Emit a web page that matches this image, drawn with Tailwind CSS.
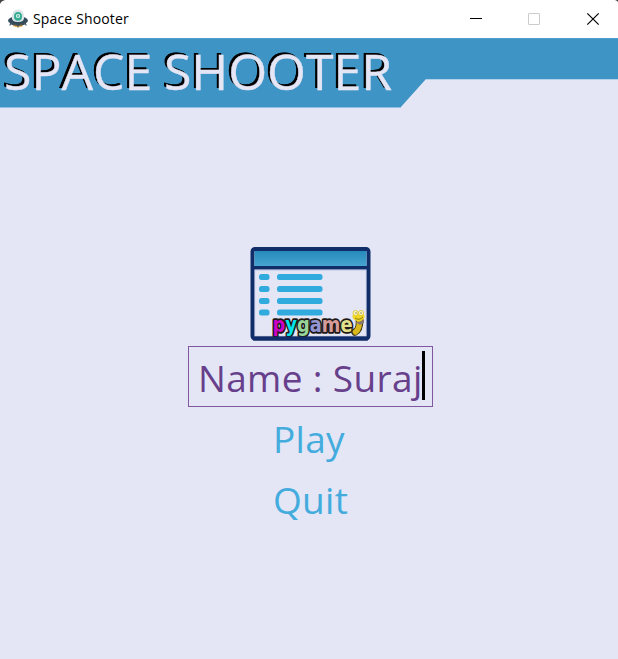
<!DOCTYPE html>
<html lang="en">
<head>
<meta charset="utf-8">
<title>Space Shooter</title>
<script src="https://cdn.jsdelivr.net/npm/@tailwindcss/browser@4"></script>
</head>
<body class="bg-[#e4e6f6]">
<div class="flex h-[659px] w-[618px] flex-col overflow-hidden bg-[#e4e6f6] font-['Open_Sans','Noto_Sans',sans-serif]">
  <header class="relative flex h-[38px] shrink-0 items-center bg-white pl-[8px]">
    <svg class="absolute top-0 left-0 h-1 w-full" viewBox="0 0 618 4"><path d="M0 0H5Q1 1 0 4ZM615 0H618V2Q617 .5 615 0Z" fill="#444"/></svg>
    <svg class="size-5 shrink-0" viewBox="0 0 20 20">
      <path d="M4 13.5H16L14.5 17.3Q10 19.4 5.5 17.3Z" fill="#e8ab48"/>
      <path d="M3 14L1.7 16.5M17 14L18.3 16.5M10 16V18.5" stroke="#526778" stroke-width="1.2"/>
      <ellipse cx="10" cy="11.5" rx="10" ry="4.4" fill="#344b5c"/>
      <path d="M3.8 8.5Q4 .8 10 .6Q16 .8 16.2 8.5Q16 13 10 13Q4 13 3.8 8.5Z" fill="#dce5e7"/>
      <path d="M6 7.5Q6 3 10 3T14 7.5Q14 11.8 10 11.8T6 7.5Z" fill="#35ac91"/>
      <circle cx="10" cy="7" r="2.1" fill="#dff5ee"/><circle cx="10" cy="7" r=".9" fill="#35ac91"/>
      <path d="M2 14.6Q10 18 18 14.6" stroke="#293e4e" fill="none"/>
    </svg>
    <span class="ml-[5px] text-[14px] leading-5 tracking-[0.15px] whitespace-nowrap text-black">Space Shooter</span>
    <svg class="ml-auto h-[38px] w-[178px] shrink-0" viewBox="0 0 178 38" fill="none">
      <path d="M30 18.5H42" stroke="#000"/>
      <rect x="88.5" y="13.5" width="11" height="11" rx=".5" stroke="#ccc"/>
      <path d="M147.3 13.3L158.7 24.7M158.7 13.3L147.3 24.7" stroke="#000" stroke-width="1.2"/>
    </svg>
  </header>
  <section class="relative h-[70px] shrink-0">
    <svg class="absolute inset-0 h-[70px] w-[618px]" viewBox="0 0 618 70">
      <path d="M0 0H618V41H426L400 70H0Z" fill="#3e94c4"/>
      <path d="M0 .5H618" stroke="#4d9ccb"/>
      <path d="M426 41.5H618M0 69.5H400" stroke="#a5cbe8" stroke-width=".8"/>
    </svg>
    <h1 class="relative pl-[4px] text-[50px] leading-[66px] [word-spacing:-1.5px] whitespace-nowrap text-[#e4e6f6] [-webkit-text-stroke:0.4px_#e4e6f6] [text-shadow:-2px_-2px_0_#000,-2.4px_-2.4px_0_#000]">SPACE SHOOTER</h1>
  </section>
  <main class="flex flex-col items-center pt-[139px]">
    <svg class="mr-[-3px] h-[94px] w-[121px]" viewBox="0 0 121 94">
      <defs><linearGradient id="bar" x2="0" y2="1"><stop stop-color="#258abb"/><stop offset="1" stop-color="#48a5d1"/></linearGradient></defs>
      <rect x="2.5" y="2" width="116" height="89.5" rx="2.5" fill="#e4e6f6" stroke="#102d69" stroke-width="4"/>
      <rect x="4.5" y="4" width="112" height="15.5" fill="url(#bar)"/>
      <path d="M3 20.8H118" stroke="#102d69" stroke-width="3.6"/>
      <path d="M4.6 22.8H116.4V89.4H4.6Z" fill="none" stroke="#8c9bc4" stroke-width=".7"/>
      <g fill="#31aade">
        <rect x="9" y="27" width="10.5" height="6" rx="2.5"/><rect x="27" y="27" width="45.5" height="6" rx="2.5"/>
        <rect x="9" y="39" width="10.5" height="6" rx="2.5"/><rect x="27" y="39" width="45.5" height="6" rx="2.5"/>
        <rect x="9" y="51" width="10.5" height="6" rx="2.5"/><rect x="27" y="51" width="45.5" height="6" rx="2.5"/>
        <rect x="9" y="62.5" width="10.5" height="6" rx="2.5"/><rect x="27" y="62.5" width="45.5" height="6" rx="2.5"/>
      </g>
      <text x="22.500" y="84.500" lengthAdjust="spacingAndGlyphs" textLength="80" font-family="DejaVu Sans, sans-serif" font-weight="bold" font-size="21" stroke="#1d1815" stroke-width="3.500" stroke-linejoin="round" paint-order="stroke"><tspan fill="#cc00c8">p</tspan><tspan fill="#00e4ee">y</tspan><tspan fill="#96d49a">g</tspan><tspan fill="#9494d0">a</tspan><tspan fill="#d69c9c">m</tspan><tspan fill="#e2e08c">e</tspan></text>
      <path d="M3 91.5H118" stroke="#102d69" stroke-width="4"/>
      <path d="M105 85Q110 83 109.5 72" fill="none" stroke="#3d3512" stroke-width="7.5" stroke-linecap="round"/>
      <path d="M105.5 85Q110 82 109.5 71" fill="none" stroke="#d9b91d" stroke-width="5.5" stroke-linecap="round"/>
      <path d="M104 74Q109 77 114 72V76L110 78Z" fill="#8a7772"/>
      <ellipse cx="108.5" cy="69.5" rx="6" ry="4.5" fill="#efd720"/>
      <circle cx="105.5" cy="66" r="2.6" fill="#fbf4b5" stroke="#d8bc20" stroke-width=".7"/><circle cx="111" cy="66" r="2.6" fill="#fbf4b5" stroke="#d8bc20" stroke-width=".7"/>
      <path d="M105.5 66h1M110.5 66h1" stroke="#333"/><path d="M105 71Q109 74 113 70" stroke="#76651a" stroke-width=".8" fill="none"/>
    </svg>
    <div class="relative mt-[5px] mr-[-3px] h-[61px] w-[245px] border border-[#8058a0] pl-[9px] text-[37px] leading-[62px] tracking-[0.35px] whitespace-nowrap text-[#673f8b]">Name : Suraj<span class="absolute top-[4px] left-[233px] h-[49px] w-[3px] bg-black"></span></div>
    <div class="w-[72px] text-[37px] leading-[63px] tracking-[0.3px] whitespace-nowrap text-[#43acdd]">Play</div>
    <div class="w-[72px] text-[37px] leading-[59px] tracking-[0.3px] whitespace-nowrap text-[#43acdd]">Quit</div>
  </main>
</div>
</body>
</html>
